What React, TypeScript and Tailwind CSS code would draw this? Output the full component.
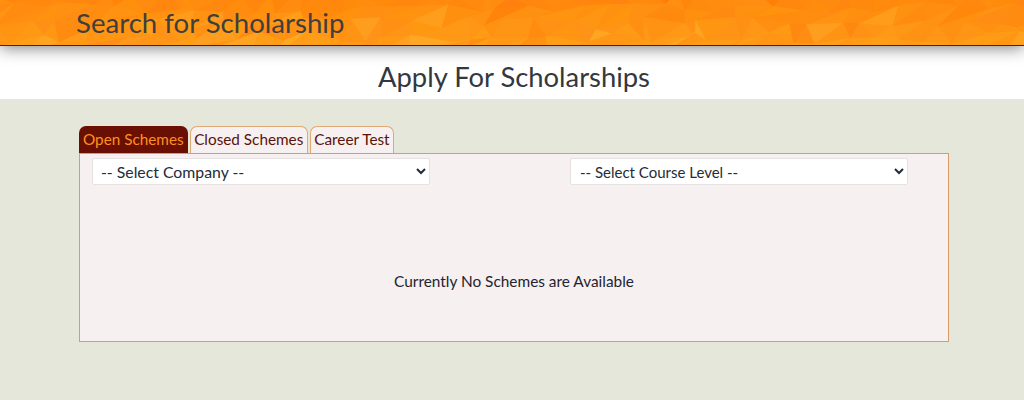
const FONT = "font-['Lato',sans-serif]";

function rng(seed: number) {
  let s = seed;
  return () => {
    s = (s * 16807) % 2147483647;
    return (s - 1) / 2147483646;
  };
}

function buildPolys() {
  const r = rng(90210);
  const cellX = 27;
  const cellY = 15;
  const cols = Math.ceil(1024 / cellX) + 3;
  const rows = 6;
  const pts: [number, number][][] = [];
  for (let y = 0; y < rows; y++) {
    const row: [number, number][] = [];
    for (let x = 0; x < cols; x++) {
      row.push([
        (x - 1 + (y % 2) * 0.5) * cellX + (r() - 0.5) * 20,
        (y - 0.5) * cellY + (r() - 0.5) * 13,
      ]);
    }
    pts.push(row);
  }
  const out: { p: string; c: string }[] = [];
  const color = (cy: number) => {
    const t = Math.max(0, Math.min(1, cy / 45));
    const roll = r();
    let g = 138 + 16 * t + (r() - 0.5) * 10;
    let b = 14 + 10 * t + (r() - 0.5) * 6;
    if (roll > 0.9 && cy > 18) {
      g += 10;
      b += 10;
    } else if (roll < 0.1) {
      g -= 8;
      b -= 3;
    }
    return `rgb(255,${Math.round(g)},${Math.round(b)})`;
  };
  for (let y = 0; y < rows - 1; y++) {
    for (let x = 0; x < cols - 1; x++) {
      const a = pts[y][x], b = pts[y][x + 1], c = pts[y + 1][x], d = pts[y + 1][x + 1];
      out.push({ p: `${a} ${b} ${c}`, c: color((a[1] + b[1] + c[1]) / 3) });
      out.push({ p: `${b} ${d} ${c}`, c: color((b[1] + d[1] + c[1]) / 3) });
    }
  }
  return out;
}

const polys = buildPolys();

function Tab({ label, active }: { label: string; active?: boolean }) {
  return (
    <div
      className={
        active
          ? "h-[27px] px-[4px] pb-[1px] flex items-center rounded-t-[7px] bg-[#6a1003] text-[#ff8f1c] text-[15.3px]"
          : "h-[27px] px-[3.5px] pb-[1px] flex items-center rounded-t-[7px] bg-[#f6f0f0] border border-b-0 border-[#dfa976] text-[#5a1408] text-[15.3px]"
      }
    >
      {label}
    </div>
  );
}

export default function App() {
  return (
    <div className={`${FONT} w-[1024px] h-[400px] overflow-hidden bg-[#e5e7da] flex flex-col`}>
      <header className="relative z-10 h-[46px] shrink-0 bg-[#ff9214] border-b border-[#5e1a05] shadow-[0_2px_16px_rgba(0,0,0,0.5)]">
        <svg className="absolute inset-0" width="1024" height="45" viewBox="0 0 1024 45" aria-hidden="true">
          {polys.map((t, i) => (
            <polygon key={i} points={t.p} fill={t.c} stroke={t.c} strokeWidth="0.5" />
          ))}
        </svg>
        <div className="relative pl-[76px] h-[45px] flex items-center text-[27.6px] text-[#3f3f3c]">
          Search for Scholarship
        </div>
      </header>
      <div className="h-[53px] shrink-0 bg-white flex items-center justify-center pt-[9px] pl-[4px] text-[27.4px] text-[#33383f]">
        Apply For Scholarships
      </div>
      <main className="pl-[79px] pt-[27px]">
        <div className="flex gap-[2px] items-end">
          <Tab label="Open Schemes" active />
          <Tab label="Closed Schemes" />
          <Tab label="Career Test" />
        </div>
        <section className="w-[870px] h-[189px] bg-[#f6f0f0] border border-[#d69c69] flex flex-col">
          <div className="pl-[12px] pt-[4px] flex gap-[140px]">
            <select className="w-[338px] h-[27px] bg-white rounded-[2px] border border-[#e6e2e2] pl-[4px] text-[15.8px] text-[#232b38]">
              <option>-- Select Company --</option>
            </select>
            <select className="w-[338px] h-[27px] bg-white rounded-[2px] border border-[#e6e2e2] pl-[5px] text-[15px] text-[#232b38]">
              <option>-- Select Course Level --</option>
            </select>
          </div>
          <p className="mt-[86px] text-center text-[15.4px] leading-[20px] text-[#1f2430]">
            Currently No Schemes are Available
          </p>
        </section>
      </main>
    </div>
  );
}
